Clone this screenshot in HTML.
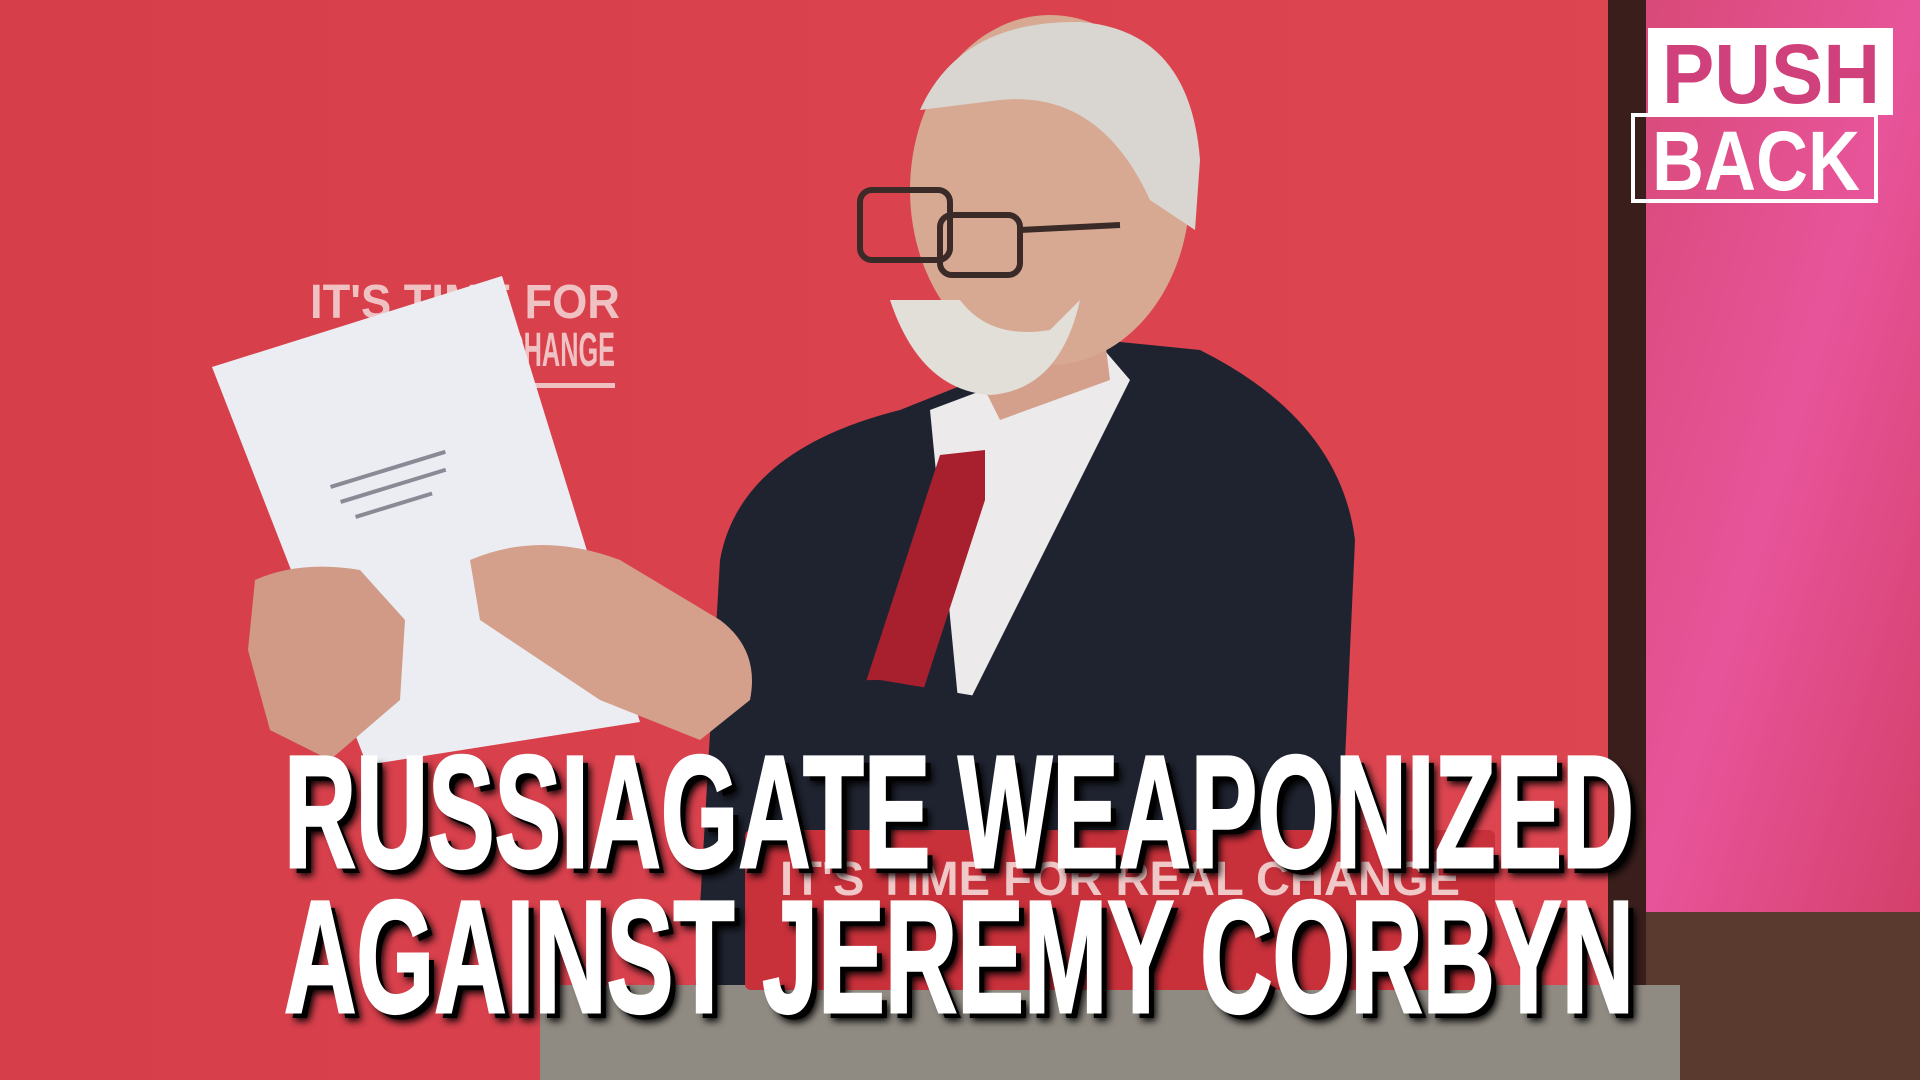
<!DOCTYPE html>
<html><head><meta charset="utf-8"><style>
html,body{margin:0;padding:0;width:1920px;height:1080px;overflow:hidden;background:#dc4550}
svg{display:block}
</style></head><body>
<svg width="1920" height="1080" viewBox="0 0 1920 1080" xmlns="http://www.w3.org/2000/svg">
<defs>
<linearGradient id="pk" x1="0" y1="0" x2="1" y2="1"><stop offset="0" stop-color="#d84a78"/><stop offset="0.5" stop-color="#e8549a"/><stop offset="1" stop-color="#d4406a"/></linearGradient>
<linearGradient id="bg" x1="0" y1="0" x2="1" y2="0"><stop offset="0" stop-color="#d63e4a"/><stop offset="1" stop-color="#de4752"/></linearGradient>
<filter id="sh" x="-5%" y="-20%" width="110%" height="140%"><feGaussianBlur stdDeviation="4"/></filter>
</defs>
<rect width="1920" height="1080" fill="url(#bg)"/>
<rect x="1608" y="0" width="40" height="1080" fill="#3a1e1c"/>
<rect x="1646" y="0" width="274" height="912" fill="url(#pk)"/>
<rect x="1646" y="912" width="274" height="168" fill="#5a3a2e"/>
<g fill="#f4d8d8" opacity="0.85" font-family="Liberation Sans, sans-serif" font-weight="bold">
<text x="310" y="318" font-size="48" textLength="310" lengthAdjust="spacingAndGlyphs">IT'S TIME FOR</text>
<text x="430" y="366" font-size="48" textLength="185" lengthAdjust="spacingAndGlyphs">REAL CHANGE</text>
<rect x="480" y="383" width="135" height="5"/>
</g>
<!-- suit -->
<path d="M690 1080 L720 560 Q740 450 900 410 L1000 370 L1100 340 L1200 350 Q1340 420 1355 540 L1345 760 L1300 1080 Z" fill="#1f2330"/>
<path d="M930 410 L1010 380 L1100 345 L1130 380 L1040 560 L960 720 Z" fill="#eceaea"/>
<path d="M940 455 L985 450 L985 500 L920 700 L860 700 Z" fill="#a8202e"/>
<path d="M955 330 L1100 300 L1110 380 L1000 420 Z" fill="#d4a08c"/>
<ellipse cx="1050" cy="190" rx="140" ry="175" fill="#d8a992"/>
<path d="M920 110 Q960 20 1080 22 Q1190 30 1200 160 L1195 230 L1150 200 Q1100 90 1000 100 Z" fill="#d9d6d2"/>
<path d="M890 300 Q920 390 990 395 Q1060 390 1080 300 L1050 330 Q990 340 960 300 Z" fill="#e2ded8"/>
<rect x="860" y="190" width="90" height="70" rx="12" fill="none" stroke="#3a2a28" stroke-width="6"/>
<rect x="940" y="215" width="80" height="60" rx="12" fill="none" stroke="#3a2a28" stroke-width="6"/>
<line x1="1020" y1="230" x2="1120" y2="225" stroke="#3a2a28" stroke-width="6"/>
<path d="M720 750 Q760 680 880 680 L1000 700 L1020 760 L880 780 Z" fill="#1f2330"/>
<!-- paper -->
<polygon points="212,367 502,276 640,722 367,765" fill="#ecedf2"/>
<g fill="#8a8a96"><rect x="330" y="485" width="120" height="4" transform="rotate(-17 330 485)"/><rect x="340" y="500" width="110" height="4" transform="rotate(-17 340 500)"/><rect x="355" y="515" width="80" height="4" transform="rotate(-17 355 515)"/></g>
<path d="M255 580 Q300 560 360 570 L405 620 L400 700 L330 760 L270 730 L248 650 Z" fill="#d09a86"/>
<path d="M470 560 Q540 530 620 560 L720 620 Q760 650 750 700 L700 740 L600 700 L480 620 Z" fill="#d4a08c"/>
<!-- podium in front -->
<rect x="540" y="985" width="1140" height="95" fill="#8f8a82"/>
<rect x="745" y="830" width="750" height="160" rx="6" fill="#c8303a"/>
<text x="780" y="895" font-family="Liberation Sans, sans-serif" font-weight="bold" font-size="48" fill="#f0c8c8" textLength="680" lengthAdjust="spacingAndGlyphs">IT'S TIME FOR REAL CHANGE</text>
<!-- headline -->
<g font-family="Liberation Sans, sans-serif" font-weight="bold" font-size="160">
<g filter="url(#sh)" fill="#000">
<text x="292" y="876" textLength="1350" lengthAdjust="spacingAndGlyphs">RUSSIAGATE WEAPONIZED</text>
<text x="292" y="1021" textLength="1350" lengthAdjust="spacingAndGlyphs">AGAINST JEREMY CORBYN</text>
</g>
<g fill="#000">
<text x="290" y="873" textLength="1350" lengthAdjust="spacingAndGlyphs">RUSSIAGATE WEAPONIZED</text>
<text x="290" y="1018" textLength="1350" lengthAdjust="spacingAndGlyphs">AGAINST JEREMY CORBYN</text>
</g>
<g fill="#fff" stroke="#fff" stroke-width="3">
<text x="284" y="867" textLength="1350" lengthAdjust="spacingAndGlyphs">RUSSIAGATE WEAPONIZED</text>
<text x="284" y="1012" textLength="1350" lengthAdjust="spacingAndGlyphs">AGAINST JEREMY CORBYN</text>
</g>
</g>
<!-- logo -->
<rect x="1648" y="28" width="245" height="87" fill="#fff"/>
<text x="1662" y="103" font-family="Liberation Sans, sans-serif" font-weight="bold" font-size="84" fill="#d0407a" textLength="218" lengthAdjust="spacingAndGlyphs">PUSH</text>
<rect x="1633" y="115" width="243" height="86" fill="none" stroke="#fff" stroke-width="4"/>
<text x="1652" y="190" font-family="Liberation Sans, sans-serif" font-weight="bold" font-size="84" fill="#fff" textLength="208" lengthAdjust="spacingAndGlyphs">BACK</text>
</svg>
</body></html>
